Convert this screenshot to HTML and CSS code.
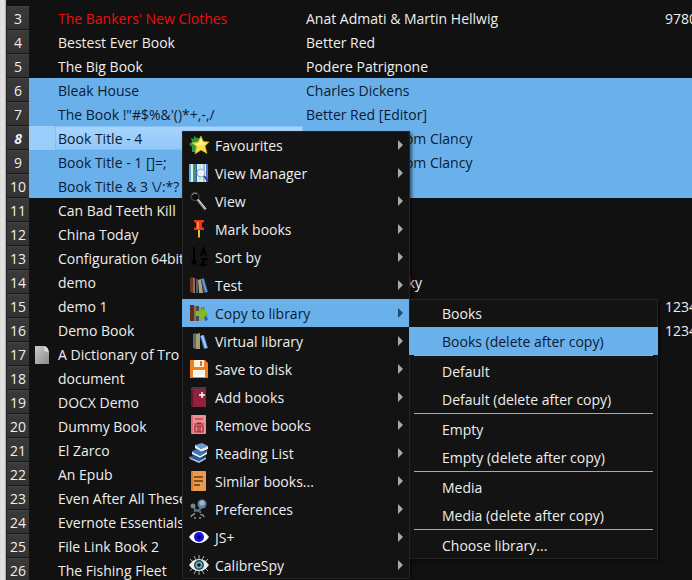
FILE: index.html
```
<!DOCTYPE html>
<html lang="en">
<head>
<meta charset="UTF-8">
<meta name="viewport" content="width=device-width, initial-scale=1.0">
<title>Library</title>
<link rel="stylesheet" href="styles.css">
</head>
<body>

<main class="library">
    <div class="splitter"></div>
    <table class="books">
        <colgroup>
            <col class="col-number">
            <col class="col-mark">
            <col class="col-title">
            <col class="col-authors">
            <col class="col-isbn">
        </colgroup>
        <tbody>
            <tr><th scope="row">3</th><td></td><td class="missing">The Bankers' New Clothes</td><td>Anat Admati &amp; Martin Hellwig</td><td>9780</td></tr>
            <tr><th scope="row">4</th><td></td><td>Bestest Ever Book</td><td>Better Red</td><td></td></tr>
            <tr><th scope="row">5</th><td></td><td>The Big Book</td><td>Podere Patrignone</td><td></td></tr>
            <tr class="selected"><th scope="row">6</th><td></td><td>Bleak House</td><td>Charles Dickens</td><td></td></tr>
            <tr class="selected"><th scope="row">7</th><td></td><td>The Book !"#$%&amp;'()*+,-,/</td><td>Better Red [Editor]</td><td></td></tr>
            <tr class="selected current"><th scope="row">8</th><td></td><td>Book Title - 4</td><td>Steve Perry &amp; Tom Clancy</td><td></td></tr>
            <tr class="selected"><th scope="row">9</th><td></td><td>Book Title - 1 []=;</td><td>Steve Perry &amp; Tom Clancy</td><td></td></tr>
            <tr class="selected"><th scope="row">10</th><td></td><td>Book Title &amp; 3 \/:*?</td><td></td><td></td></tr>
            <tr><th scope="row">11</th><td></td><td>Can Bad Teeth Kill</td><td></td><td></td></tr>
            <tr><th scope="row">12</th><td></td><td>China Today</td><td></td><td></td></tr>
            <tr><th scope="row">13</th><td></td><td>Configuration 64bit</td><td></td><td></td></tr>
            <tr><th scope="row">14</th><td></td><td>demo</td><td>Fedor Dostoevsky</td><td></td></tr>
            <tr><th scope="row">15</th><td></td><td>demo 1</td><td></td><td>1234</td></tr>
            <tr><th scope="row">16</th><td></td><td>Demo Book</td><td></td><td>1234</td></tr>
            <tr>
                <th scope="row">17</th>
                <td class="mark">
                    <svg width="14" height="18" viewBox="0 0 14 18"><defs><linearGradient id="page" x1="0" y1="0" x2="1" y2="1"><stop offset="0" stop-color="#ccc"/><stop offset="1" stop-color="#888"/></linearGradient></defs><path d="M0 0h9q5 1 5 7v11H0z" fill="url(#page)"/><path d="M9 0q1 4 0 5 3 0 5 2-1-6-5-7z" fill="#ddd"/></svg>
                </td>
                <td>A Dictionary of Tro</td><td></td><td></td>
            </tr>
            <tr><th scope="row">18</th><td></td><td>document</td><td></td><td></td></tr>
            <tr><th scope="row">19</th><td></td><td>DOCX Demo</td><td></td><td></td></tr>
            <tr><th scope="row">20</th><td></td><td>Dummy Book</td><td></td><td></td></tr>
            <tr><th scope="row">21</th><td></td><td>El Zarco</td><td></td><td></td></tr>
            <tr><th scope="row">22</th><td></td><td>An Epub</td><td></td><td></td></tr>
            <tr><th scope="row">23</th><td></td><td>Even After All These</td><td></td><td></td></tr>
            <tr><th scope="row">24</th><td></td><td>Evernote Essentials</td><td></td><td></td></tr>
            <tr><th scope="row">25</th><td></td><td>File Link Book 2</td><td></td><td></td></tr>
            <tr><th scope="row">26</th><td></td><td>The Fishing Fleet</td><td></td><td></td></tr>
        </tbody>
    </table>
</main>

<!-- Context menu -->
<div class="menu context-menu" role="menu">
    <button type="button" role="menuitem">
        <svg viewBox="0 0 20 20"><path d="M5 1l3 2 3 0-1 5 1 8-5 1-3 0 0-5-3-3 3-2-1-4 3 1z" fill="#2f9a3c"/><path d="M12 1l2.300 5.500 5.700.5-4 4 2 7.500-6-3.500-6 4 1.500-7.500L3 8l6-1z" fill="#f8df45" stroke="#d8b321" stroke-width=".6"/><path d="M12 3l1.500 4.500 4 .5-4 2-4 .5L7 9l3-1z" fill="#fff39a"/></svg>
        <span>Favourites</span>
    </button>
    <button type="button" role="menuitem">
        <svg viewBox="0 0 20 20"><path d="M0 1h19v18H0z" fill="#dceef8"/><path d="M0 1h2v18H0z" fill="#6f9fd8"/><path d="M4 1h3v18H4z" fill="#3b9a68"/><path d="M7 1h1v18H7z" fill="#2d5fa8"/><path d="M10 1h2v18h-2z" fill="#c6e6c8"/><path d="M14 1h2v18h-2z" fill="#8fc0ea"/><path d="M17 1h2v18h-2z" fill="#4a77c8"/><circle cx="12" cy="10" r="4" fill="#eef3fb" stroke="#8ea4c8"/><path d="M15 13l4 5" stroke="#453a86" stroke-width="2"/></svg>
        <span>View Manager</span>
    </button>
    <button type="button" role="menuitem">
        <svg viewBox="0 0 20 20"><circle cx="6" cy="5.500" r="4" fill="#0c0c0c" stroke="#444" stroke-width="1.200"/><path d="M3 4q2-3 5-1" stroke="#999" fill="none"/><path d="M8.500 8.500l8 10" stroke="#999" stroke-width="2.500"/><path d="M9.500 8.500l7.500 9.500" stroke="#e4e4e4"/></svg>
        <span>View</span>
    </button>
    <button type="button" role="menuitem">
        <svg viewBox="0 0 20 20"><path d="M9 11h2v7l-1 1-1-1z" fill="#d8c431"/><path d="M5 1h10v2l-2 1v4l2 1v2H5V9l2-1V4L5 3z" fill="#e2381b"/><path d="M8 3h2v7H8z" fill="#ff8a50"/></svg>
        <span>Mark books</span>
    </button>
    <button type="button" role="menuitem">
        <svg viewBox="0 0 20 20" fill="none" stroke="#000" stroke-width="2"><path d="M5 0v16M12 9l2.500-8L17 9M13 6h4M12 12h5l-5 6h6"/><path d="M2 14h6l-3 4z" fill="#000" stroke-width="1"/></svg>
        <span>Sort by</span>
    </button>
    <button type="button" role="menuitem">
        <svg viewBox="0 0 20 20"><path d="M1 3l3-1v16l-3-1z" fill="#6b3528"/><path d="M4 3h2v15H4z" fill="#9a6756"/><path d="M7 4h2v14H7z" fill="#45606b"/><path d="M9 5l3-1 2 14H10z" fill="#b0a080"/><path d="M12 4l3-1 4 14-4 1z" fill="#416ba3"/><path d="M13 4l1 0 4 13h-1z" fill="#8db1dd"/></svg>
        <span>Test</span>
    </button>
    <button type="button" role="menuitem" class="active" aria-expanded="true">
        <svg viewBox="0 0 20 20"><path d="M1 2h4v16H1z" fill="#5a3023"/><path d="M5 3h2v15H5z" fill="#9b6d52"/><path d="M7 3h3v15H7z" fill="#3f5148"/><path d="M10 4h3v14h-3z" fill="#a39a70"/><path d="M12 5l3-1 4 13-3 1z" fill="#365fa2"/><path d="M7 8h6V4l6 6.500L13 17v-4H7z" fill="#79c01e"/></svg>
        <span>Copy to library</span>
    </button>
    <button type="button" role="menuitem">
        <svg viewBox="0 0 20 20"><path d="M4 3l3-1v16l-3-1z" fill="#58706a"/><path d="M7 3l4-1v16H7z" fill="#a99a72"/><path d="M11 5l4-1 4 13-4 1z" fill="#4d83cb"/><path d="M12 5l2-1 4 13h-2z" fill="#a5caf3"/></svg>
        <span>Virtual library</span>
    </button>
    <button type="button" role="menuitem">
        <svg viewBox="0 0 20 20"><path d="M1 1h15l3 3v15H1z" fill="#f0801f"/><path d="M5 1h10v7H5z" fill="#fff4df"/><path d="M11 2h2v5h-2z" fill="#e66b16"/><path d="M4 11h12v7H4z" fill="#fff"/><path d="M5 13h10M5 15h10" stroke="#eee2d4"/></svg>
        <span>Save to disk</span>
    </button>
    <button type="button" role="menuitem">
        <svg viewBox="0 0 20 20"><path d="M3 0h14v20H4q-2 0-2-2V2z" fill="#92213e"/><path d="M3 0h14v2H3z" fill="#51343e"/><path d="M2 3h2v16q-2 0-2-2z" fill="#65152a"/><path d="M13 5v6M10 8h6" stroke="#fff" stroke-width="1.500"/></svg>
        <span>Add books</span>
    </button>
    <button type="button" role="menuitem">
        <svg viewBox="0 0 20 20"><rect x="2" width="15" height="19" rx="1" fill="#e99097"/><path d="M2 1h2v17H2z" fill="#d96d77"/><path d="M6 4h8" stroke="#a8202b"/><path d="M5 9h10M8 8h4M6 11h8v6H6zM9 11v6M11 11v6" fill="none" stroke="#a8202b" stroke-width="1.200"/></svg>
        <span>Remove books</span>
    </button>
    <button type="button" role="menuitem">
        <svg viewBox="0 0 20 20"><path d="M6 2l7-2 6 3-7 3z" fill="#6b9bd0"/><path d="M6 2l6 4 7-3v3l-7 3-6-4z" fill="#e8eef4"/><path d="M3 8l5-2 5 3 5-2v2l-7 4-8-3z" fill="#3a76bc"/><path d="M3 9l8 4 7-4v2l-7 4-8-4z" fill="#eef3f8"/><path d="M0 14l4-2 7 3 7-3-7 5-1 1z" fill="#285a9e"/><path d="M0 14l10 4 7-4v2l-7 4-9-4z" fill="#a9c4df"/></svg>
        <span>Reading List</span>
    </button>
    <button type="button" role="menuitem">
        <svg viewBox="0 0 20 20"><rect x="2" width="15" height="20" rx="1" fill="#eb994a"/><path d="M2 1h2v18H2z" fill="#d77b2d"/><path d="M5 6h9M5 10h9M5 14h6" stroke="#63381b" stroke-width="1.500"/></svg>
        <span>Similar books...</span>
    </button>
    <button type="button" role="menuitem">
        <svg viewBox="0 0 20 20"><circle cx="13" cy="5" r="4.500" fill="#66829a"/><circle cx="13" cy="4" r="2.500" fill="#9fb9cc"/><circle cx="4" cy="7" r="2.500" fill="#738590"/><path d="M5 10l4 2 3-3" stroke="#66747e" stroke-width="2" fill="none"/><path d="M6 11l-1 5M11 12l1 4" stroke="#66747e" stroke-width="2" stroke-dasharray="2 1"/><path d="M2 18q1-3 3-2M12 16q2-1 3 2M5 19h2M10 19h2" stroke="#8d9ba3" fill="none" stroke-width="1.500"/></svg>
        <span>Preferences</span>
    </button>
    <button type="button" role="menuitem">
        <svg viewBox="0 0 20 20"><path d="M0 10q4-6 10-6t10 6q-4 6-10 6T0 10z" fill="#fff"/><circle cx="10" cy="10" r="5" fill="#1515de"/><circle cx="10" cy="10" r="2" fill="#0000a0"/></svg>
        <span>JS+</span>
    </button>
    <button type="button" role="menuitem">
        <svg viewBox="0 0 20 20"><path d="M10 0v4M5 1l2 4M15 1l-2 4M1 4l3 3M19 4l-3 3M10 16v4M5 19l2-4M15 19l-2-4M1 16l3-3M19 16l-3-3" stroke="#aaa"/><path d="M0 10q4-6 10-6t10 6q-4 6-10 6T0 10z" fill="#e8eeee"/><circle cx="10" cy="10" r="5" fill="#1f4657"/><circle cx="10" cy="10" r="3.500" fill="#78a9b4"/><circle cx="10" cy="10" r="1.800" fill="#112"/></svg>
        <span>CalibreSpy</span>
    </button>
</div>

<!-- Copy to library submenu -->
<div class="menu submenu" role="menu">
    <button type="button" role="menuitem">Books</button>
    <button type="button" role="menuitem" class="active">Books (delete after copy)</button>
    <hr>
    <button type="button" role="menuitem">Default</button>
    <button type="button" role="menuitem">Default (delete after copy)</button>
    <hr>
    <button type="button" role="menuitem">Empty</button>
    <button type="button" role="menuitem">Empty (delete after copy)</button>
    <hr>
    <button type="button" role="menuitem">Media</button>
    <button type="button" role="menuitem">Media (delete after copy)</button>
    <hr>
    <button type="button" role="menuitem">Choose library...</button>
</div>

</body>
</html>
```
FILE: styles.css
```
* {
    box-sizing: border-box;
}
body {
    margin: 0;
    height: 100vh;
    overflow: hidden;
    position: relative;
    background: #111;
    color: #eee;
    font-family: "Segoe UI", "Open Sans", sans-serif;
    font-size: 14px;
}
.library {
    display: flex;
    min-height: 100%;
}
.splitter {
    flex: 0 0 7px;
    background: linear-gradient(to right, #ddd 0, #e4e4e4 4px, #aaa 6px, #222 6px);
}
.books {
    flex: 1;
    width: 0;
    table-layout: fixed;
    border-collapse: collapse;
    margin-top: 6px;
    align-self: flex-start;
}
.col-number {
    width: 22px;
}
.col-mark {
    width: 26px;
}
.col-title {
    width: 248px;
}
.col-authors {
    width: 359px;
}
.books tr {
    height: 24px;
}
.books th,
.books td {
    padding: 2px 0 0 3px;
    line-height: 22px;
    white-space: nowrap;
    overflow: hidden;
}
.books th {
    padding: 2px 0 0;
    font-weight: normal;
    text-align: center;
    background: linear-gradient(#4a4a4a 0, #3a3a3a 1px, #323232 23px, #181818 23px);
}
.books .mark {
    padding-left: 6px;
}
.mark svg {
    display: block;
}
.books .missing {
    color: #f00c0c;
}
.books .selected td {
    background: #6ab1ec;
    color: #0a1a30;
}
.books .current th {
    font-weight: bold;
    font-style: italic;
}
.books .current td:nth-child(2) {
    background: #9acdfc;
}
.books .current td:nth-child(3) {
    background: linear-gradient(#a8d5ff, #90c6f7);
    box-shadow: inset 0 0 0 1px #86bdf0;
}

.menu {
    position: absolute;
    background: #131313;
    box-shadow: inset 0 0 0 1px #252525, 2px 2px 3px rgba(0, 0, 0, 0.5);
}
.context-menu {
    top: 131px;
    left: 182px;
    width: 228px;
}
.submenu {
    top: 299px;
    left: 409px;
    width: 249px;
}
.menu button {
    display: flex;
    align-items: center;
    gap: 6px;
    width: 100%;
    height: 28px;
    padding: 0 7px;
    border: none;
    background: none;
    color: #eee;
    font: inherit;
    text-align: left;
}
.menu .active,
.menu button:hover {
    background: #6ab1ec;
    color: #0a1a30;
}
.menu button svg {
    width: 20px;
    height: 20px;
}
.context-menu button::after {
    content: "";
    margin-left: auto;
    border: 5px solid transparent;
    border-left-color: #aaa;
    border-right-width: 0;
}
.context-menu .active::after {
    border-left-color: #1d4b75;
}
.menu.submenu button {
    padding-left: 33px;
}
.menu hr {
    height: 2px;
    margin: 0 5px;
    border: none;
    border-top: 1px solid #aaa;
}
```
